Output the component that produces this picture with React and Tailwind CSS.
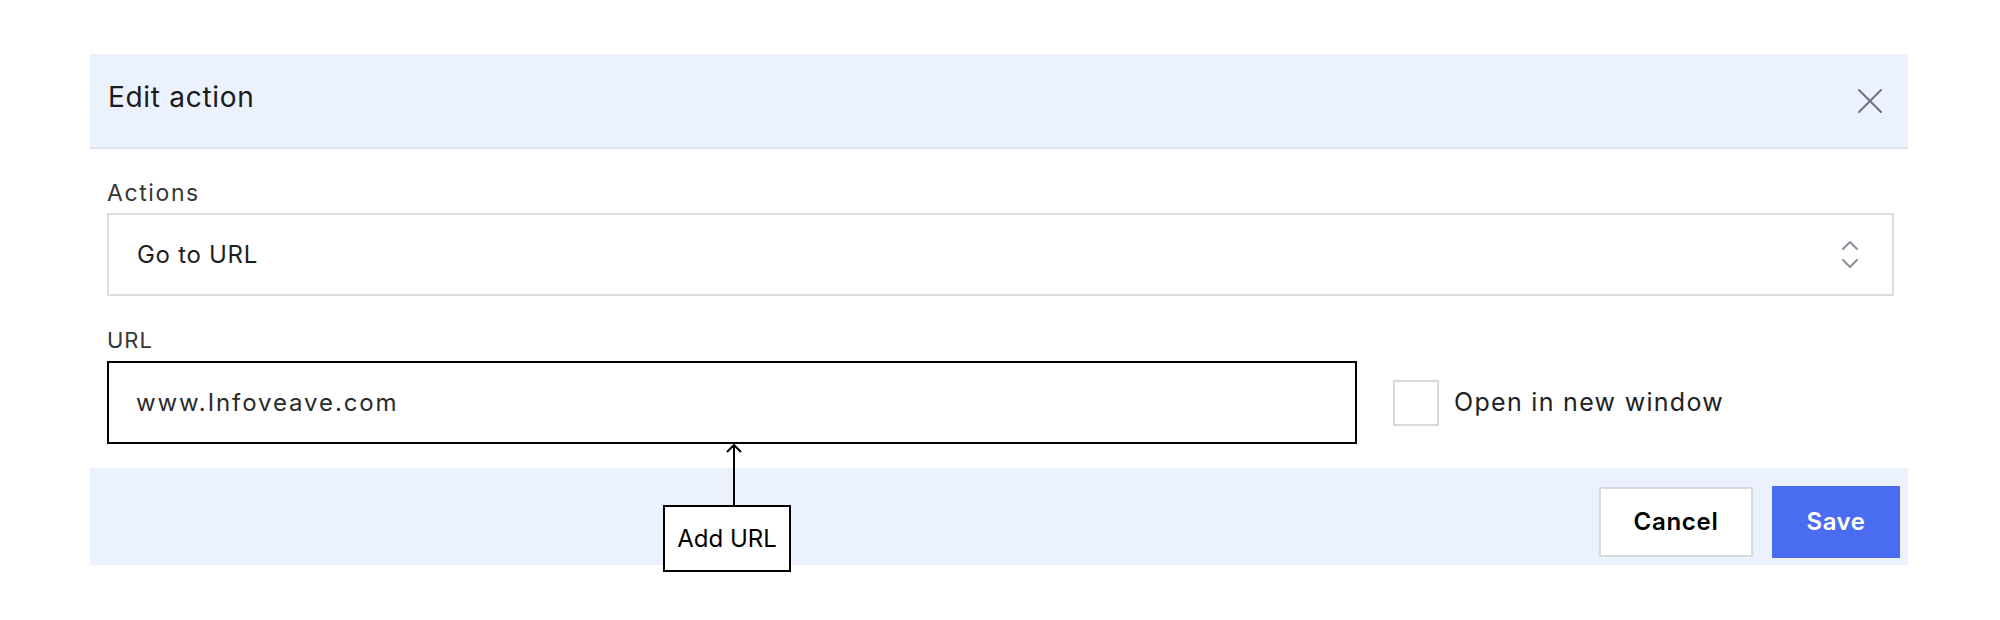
import React from 'react'

const font = { fontFamily: 'Inter, "Noto Sans", sans-serif' }

const CloseIcon = () => (
  <svg width="26" height="26" viewBox="0 0 26 26" fill="none" stroke="#6f747d" strokeWidth="2" strokeLinecap="round">
    <path d="M2 2 L24 24 M24 2 L2 24" />
  </svg>
)

const UpDownIcon = () => (
  <svg width="18" height="29" viewBox="0 0 18 29" fill="none" stroke="#8a8f98" strokeWidth="2" strokeLinecap="round" strokeLinejoin="round">
    <path d="M2 9 L9 2 L16 9" />
    <path d="M2 20 L9 27 L16 20" />
  </svg>
)

const App = () => {
  return (
    <div className="w-[2000px] h-[620px] bg-white pt-[54px] pl-[90px]" style={font}>
      <div className="w-[1818px]">
        <div className="h-[95px] bg-[#ebf1fd] border-b-2 border-[#dde3ec] flex items-center justify-between pl-[18px] pr-[25px]">
          <span className="text-[28px] tracking-[0.7px] text-[#1c1c1c] pb-[8px]">Edit action</span>
          <CloseIcon />
        </div>

        <div className="pl-[17px] pr-[14px] pt-[29px]">
          <div className="text-[23px] leading-[30px] tracking-[1.6px] text-[#363636] mb-[5px]">Actions</div>
          <div className="h-[83px] border-2 border-[#dadee4] flex items-center justify-between pl-[28px] pr-[33px]">
            <span className="text-[24px] tracking-[0.7px] text-[#1e1e1e]">Go to URL</span>
            <UpDownIcon />
          </div>

          <div className="mt-[31px] text-[22px] leading-[26px] tracking-[1px] text-[#363636] mb-[8px]">URL</div>
          <div className="flex items-center">
            <div className="w-[1250px] h-[83px] border-2 border-black flex items-center pl-[27px] text-[24px] tracking-[1.9px] text-[#2a2a2a]">
              www.Infoveave.com
            </div>
            <div className="ml-[36px] w-[46px] h-[46px] border-2 border-[#d6dae1] bg-white"></div>
            <span className="ml-[15px] text-[25px] tracking-[1.3px] text-[#222]">Open in new window</span>
          </div>
        </div>

        <div className="relative mt-[24px] h-[97px] bg-[#ebf1fd] flex justify-end items-start pt-[19px] pr-[8px] gap-[19px]">
          <button className="w-[154px] h-[70px] border-2 border-[#d7dbe1] bg-white text-[24px] tracking-[0.7px] font-semibold text-black">
            Cancel
          </button>
          <button className="w-[128px] h-[72px] -mt-px bg-[#4a6cf1] text-[24px] tracking-[0.5px] font-semibold text-white">
            Save
          </button>

          <svg className="absolute left-[636px] top-[-24px]" width="16" height="62" viewBox="0 0 16 62" fill="none" stroke="black" strokeWidth="2">
            <path d="M8 1 L8 62" />
            <path d="M1 8 L8 1 L15 8" />
          </svg>
          <div className="absolute left-[573px] top-[37px] w-[128px] h-[67px] border-2 border-black bg-white flex items-center justify-center text-[24px] text-black">
            Add URL
          </div>
        </div>
      </div>
    </div>
  )
}

export default App
